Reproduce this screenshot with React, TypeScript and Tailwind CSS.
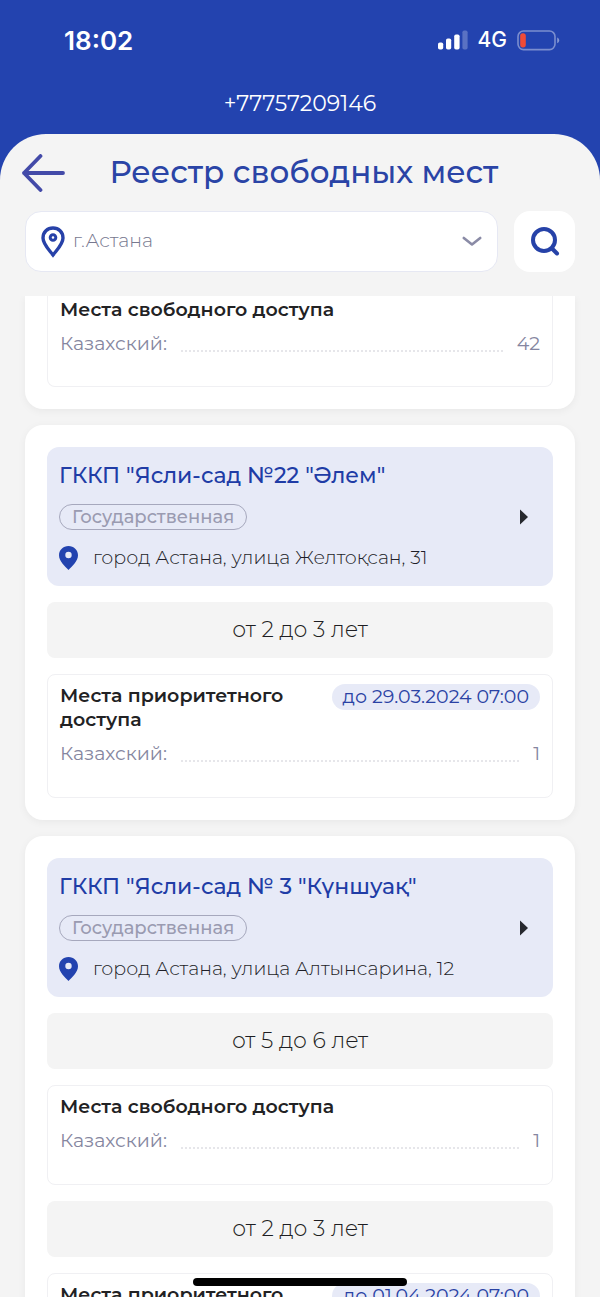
import React, { useState } from 'react';

interface Place {
  title: string;
  until?: string;
  language: string;
  count: number;
}

interface AgeGroup {
  age: string;
  places: Place[];
}

interface Kindergarten {
  id: number;
  name: string;
  type: string;
  address: string;
  groups: AgeGroup[];
}

const kindergartens: Kindergarten[] = [
  {
    id: 22,
    name: 'ГККП "Ясли-сад №22 "Әлем"',
    type: 'Государственная',
    address: 'город Астана, улица Желтоқсан, 31',
    groups: [
      {
        age: 'от 2 до 3 лет',
        places: [
          { title: 'Места приоритетного доступа', until: 'до 29.03.2024 07:00', language: 'Казахский:', count: 1 },
        ],
      },
    ],
  },
  {
    id: 3,
    name: 'ГККП "Ясли-сад № 3 "Күншуақ"',
    type: 'Государственная',
    address: 'город Астана, улица Алтынсарина, 12',
    groups: [
      {
        age: 'от 5 до 6 лет',
        places: [{ title: 'Места свободного доступа', language: 'Казахский:', count: 1 }],
      },
      {
        age: 'от 2 до 3 лет',
        places: [
          { title: 'Места приоритетного доступа', until: 'до 01.04.2024 07:00', language: 'Казахский:', count: 1 },
        ],
      },
    ],
  },
];

const StatusBar: React.FC = () => (
  <div className="flex h-20 items-center justify-between pr-10 pl-16 font-['Inter',sans-serif] text-white">
    <span className="text-[26px] font-semibold">18:02</span>
    <div className="flex items-center gap-[10px]">
      <svg width="30" height="20" viewBox="0 0 30 20" fill="currentColor" aria-hidden="true">
        <rect x="0" y="12.5" width="5.2" height="7" rx="1.8" />
        <rect x="8" y="8.5" width="5.2" height="11" rx="1.8" />
        <rect x="16.2" y="4.5" width="5.4" height="15" rx="1.8" />
        <rect x="24.4" y="0.5" width="5.2" height="19" rx="1.8" opacity="0.25" />
      </svg>
      <span className="text-[21px] font-medium">4G</span>
      <svg width="43" height="21" viewBox="0 0 43 21" fill="none" aria-hidden="true">
        <rect x="1" y="1" width="37" height="18.6" rx="5.5" stroke="#fff" strokeOpacity="0.4" strokeWidth="1.6" />
        <rect x="3.2" y="3.2" width="5.6" height="14.2" rx="2.6" fill="#f04b36" />
        <path d="M40.2 7.4c1.3.5 2 1.6 2 2.9s-.7 2.4-2 2.9z" fill="#fff" fillOpacity="0.45" />
      </svg>
    </div>
  </div>
);

const PlacePanel: React.FC<{ place: Place; continued?: boolean }> = ({ place, continued }) => (
  <section
    className={
      continued
        ? 'rounded-b-lg border border-t-0 border-[#f0f0f3] px-3 pt-0.5 pb-[30px]'
        : 'rounded-lg border border-[#f0f0f3] px-3 pt-[9px] pb-[31px]'
    }
  >
    <div className="flex items-start justify-between gap-4">
      <h3 className="text-[19px] leading-6 font-semibold text-[#222224]">{place.title}</h3>
      {place.until && (
        <span className="shrink-0 rounded-full bg-[#e7eaf7] px-[11px] text-[19px] leading-[26px] text-[#2a42a4]">
          {place.until}
        </span>
      )}
    </div>
    <div className="mt-[10px] flex gap-[14px] text-[19px] leading-6 text-[#8586a0]">
      <span>{place.language}</span>
      <span className="h-5 flex-1 border-b-2 border-dotted border-[#e6e6ea]" />
      <span>{place.count}</span>
    </div>
  </section>
);

const KindergartenCard: React.FC<{ item: Kindergarten }> = ({ item }) => (
  <article className="flex flex-col gap-4 rounded-[18px] bg-white p-[22px] shadow-[0_2px_8px_rgba(0,0,0,0.05)]">
    <a href={`#kindergarten-${item.id}`} className="flex items-center rounded-xl bg-[#e7eaf7] py-4 pr-[25px] pl-3">
      <div className="flex flex-1 flex-col items-start gap-4">
        <h2 className="text-[22px] leading-[25px] font-medium text-[#203ca6]">{item.name}</h2>
        <span className="rounded-full border border-[#a6a8bd] px-3 text-[18px] leading-6 font-medium text-[#9a9bb1]">
          {item.type}
        </span>
        <div className="flex items-center gap-[15px] text-[19px] leading-6 font-light text-[#1e1e28]">
          <svg width="19" height="24" viewBox="0 0 19 24" aria-hidden="true">
            <path
              fillRule="evenodd"
              d="M9.5 0C4.2 0 0 4 0 9.200c0 6 6 11 9.500 14.800C13 20.200 19 15.200 19 9.200 19 4 14.800 0 9.500 0zm0 5.800a3.200 3.200 0 1 1 0 6.400 3.200 3.200 0 0 1 0-6.400z"
              fill="#2343af"
            />
          </svg>
          <span>{item.address}</span>
        </div>
      </div>
      <svg width="8" height="16" viewBox="0 0 8 16" fill="#26282e" aria-hidden="true">
        <path d="M0 0.500L8 8L0 15.500z" />
      </svg>
    </a>
    {item.groups.map((group) => (
      <React.Fragment key={group.age}>
        <div className="rounded-lg bg-[#f4f4f4] py-4 text-center text-[22px] leading-6 font-light text-[#1e1e22]">
          {group.age}
        </div>
        {group.places.map((place) => (
          <PlacePanel key={place.title} place={place} />
        ))}
      </React.Fragment>
    ))}
  </article>
);

const App: React.FC = () => {
  const [city, setCity] = useState<string>('astana');

  return (
    <div className="flex h-screen flex-col overflow-hidden bg-[#2343af] font-['Montserrat','Inter',sans-serif]">
      <StatusBar />
      <p className="pt-2 pb-[14px] text-center text-[22px] leading-8 text-white">+77757209146</p>

      <main className="flex min-h-0 flex-1 flex-col rounded-t-[46px] bg-[#f4f4f4]">
        <header className="flex items-center px-[22px] pt-4">
          <button type="button" aria-label="Назад" className="w-11">
            <svg width="43" height="38" viewBox="0 0 43 38" fill="none" aria-hidden="true">
              <path
                d="M18.500 2L2 19l16.500 17M2 19h39"
                stroke="#434aa8"
                strokeWidth="3.800"
                strokeLinecap="round"
                strokeLinejoin="round"
              />
            </svg>
          </button>
          <h1 className="flex-1 pr-9 text-center text-[31px] leading-[45px] font-medium text-[#2a44a6]">
            Реестр свободных мест
          </h1>
        </header>

        <form className="flex gap-4 px-[25px] pt-4 pb-6" onSubmit={(e) => e.preventDefault()}>
          <div className="flex h-[61px] flex-1 items-center rounded-2xl border border-[#e6e8f3] bg-white px-[15px]">
            <svg width="24" height="32" viewBox="0 0 24 32" fill="none" stroke="#2741a8" aria-hidden="true">
              <path
                d="M12 29C8 23.800 2 18.200 2 12 2 6.200 6.400 2 12 2s10 4.200 10 10c0 6.200-6 11.800-10 17z"
                strokeWidth="3.400"
              />
              <circle cx="12" cy="11.500" r="2.800" strokeWidth="3" />
            </svg>
            <select
              aria-label="Город"
              value={city}
              onChange={(e) => setCity(e.target.value)}
              className="flex-1 appearance-none bg-transparent pl-2 text-[19px] font-light text-[#77788f] outline-none"
            >
              <option value="astana">г.Астана</option>
              <option value="almaty">г.Алматы</option>
            </select>
            <svg width="20" height="11" viewBox="0 0 20 11" fill="none" aria-hidden="true">
              <path
                d="M1.800 2L10 8.500L18.200 2"
                stroke="#8a8ba6"
                strokeWidth="2.600"
                strokeLinecap="round"
                strokeLinejoin="round"
              />
            </svg>
          </div>
          <button
            type="submit"
            aria-label="Поиск"
            className="flex size-[61px] items-center justify-center rounded-2xl bg-white"
          >
            <svg width="30" height="31" viewBox="0 0 30 31" fill="none" stroke="#2642a8" strokeWidth="4" aria-hidden="true">
              <circle cx="14" cy="14" r="11" />
              <path d="M22 22.500l5 5" strokeLinecap="round" />
            </svg>
          </button>
        </form>

        <div className="flex min-h-0 flex-1 flex-col gap-4 overflow-y-auto px-[25px] [scrollbar-width:none] *:shrink-0">
          <article className="rounded-b-[18px] bg-white px-[22px] pb-[22px] shadow-[0_2px_8px_rgba(0,0,0,0.05)]">
            <PlacePanel continued place={{ title: 'Места свободного доступа', language: 'Казахский:', count: 42 }} />
          </article>
          {kindergartens.map((item) => (
            <KindergartenCard key={item.id} item={item} />
          ))}
        </div>
      </main>

      <div className="fixed bottom-[11px] left-1/2 h-2 w-[214px] -translate-x-1/2 rounded-full bg-black" />
    </div>
  );
};

export default App;
